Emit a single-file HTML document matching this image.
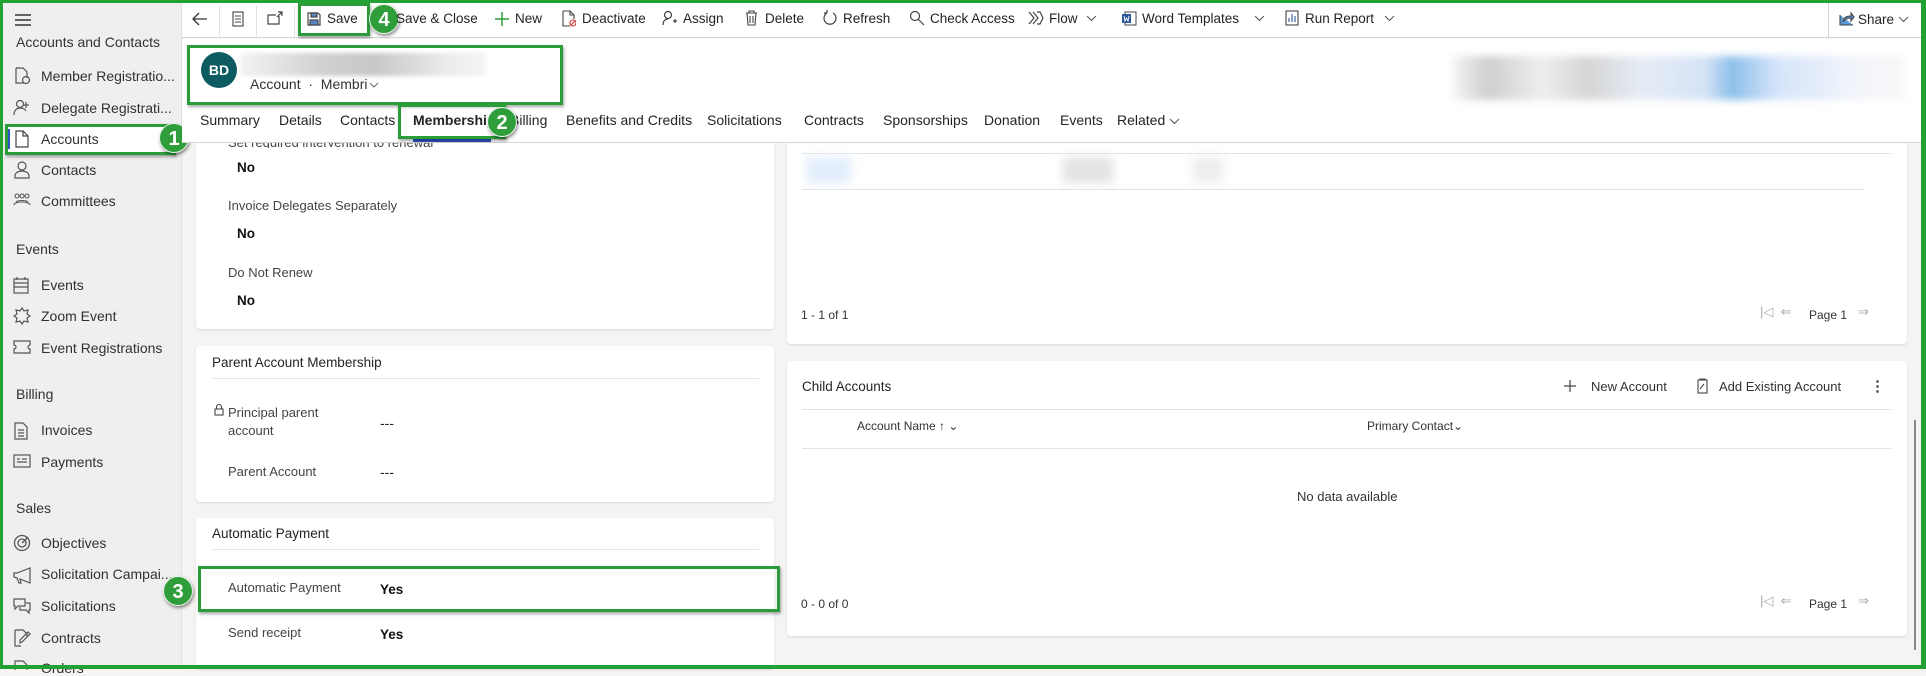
<!DOCTYPE html>
<html><head><meta charset="utf-8"><style>
*{margin:0;padding:0;box-sizing:border-box}
body{width:1926px;height:669px;overflow:hidden;background:#f5f4f3;font-family:"Liberation Sans",sans-serif;color:#242424;position:relative}
.a{position:absolute;white-space:nowrap}
.sb{position:absolute;left:0;top:0;width:182px;height:669px;background:#efefef;border-right:1px solid #e0e0e0}
.si{font-size:14px;color:#323130}
.sh{font-size:14px;color:#323130}
.tb{font-size:13.5px;color:#242424}
.tab{font-size:14px;color:#242424;top:112px}
.card{position:absolute;background:#fff;border-radius:4px;box-shadow:0 1px 2px rgba(0,0,0,.12)}
.lbl{font-size:13px;color:#444}
.val{font-size:13.5px;font-weight:bold;color:#111}
.num{position:absolute;width:30px;height:30px;border-radius:50%;background:#2f9e3a;color:#fff;font-weight:bold;font-size:20px;text-align:center;line-height:30px;box-shadow:1px 2px 3px rgba(0,0,0,.45);border:1px solid #e8f5e9}
.gb{position:absolute;border:3px solid #2a9d3a;box-shadow:1px 2px 3px rgba(0,0,0,.35)}
.sm{font-size:12px;color:#333}
svg{position:absolute}
</style></head><body>
<div class="sb"></div>
<svg style="left:14px;top:13px" width="18" height="14"><path d="M1 2h16M1 7h16M1 12h16" stroke="#333" stroke-width="1.4"/></svg>
<div class="a sh" style="left:16px;top:34px">Accounts and Contacts</div>
<svg style="left:13px;top:67px" width="18" height="18" fill="none" stroke="#555" stroke-width="1.2"><path d="M3 1h7l4 4v6M3 1v15h8"/><circle cx="13" cy="13" r="3.5"/></svg>
<div class="a si" style="left:41px;top:68px">Member Registratio...</div>
<svg style="left:13px;top:99px" width="18" height="18" fill="none" stroke="#555" stroke-width="1.2"><circle cx="7" cy="5" r="3.5"/><path d="M1 16c0-5 3-7 6-7s5 1 6 3M13 3v6M10 6h6"/></svg>
<div class="a si" style="left:41px;top:100px">Delegate Registrati...</div>
<div class="a" style="left:6px;top:125px;width:168px;height:28px;background:#fff"></div>
<div class="a" style="left:7px;top:129px;width:3px;height:20px;background:#2b55c7"></div>
<svg style="left:14px;top:130px" width="16" height="18" fill="none" stroke="#444" stroke-width="1.2"><path d="M2 1h7l5 5v11H2z M9 1v5h5"/></svg>
<div class="a si" style="left:41px;top:131px">Accounts</div>
<div class="gb" style="left:5px;top:124px;width:171px;height:31px"></div>
<div class="num" style="left:159px;top:123px">1</div>
<svg style="left:13px;top:161px" width="18" height="18" fill="none" stroke="#555" stroke-width="1.2"><circle cx="9" cy="5" r="4"/><path d="M2 17v-2c0-3 3-5 7-5s7 2 7 5v2z"/></svg>
<div class="a si" style="left:41px;top:162px">Contacts</div>
<svg style="left:13px;top:193px" width="18" height="14" fill="none" stroke="#555" stroke-width="1.1"><circle cx="4" cy="3" r="2"/><circle cx="9" cy="3" r="2"/><circle cx="14" cy="3" r="2"/><path d="M1 12c0-4 16-4 16 0M3 9c2-2 10-2 12 0"/></svg>
<div class="a si" style="left:41px;top:193px">Committees</div>
<div class="a sh" style="left:16px;top:241px">Events</div>
<svg style="left:13px;top:276px" width="16" height="18" fill="none" stroke="#555" stroke-width="1.2"><rect x="1" y="3" width="14" height="14"/><path d="M1 7h14M1 11h14M4 1v3M12 1v3"/></svg>
<div class="a si" style="left:41px;top:277px">Events</div>
<svg style="left:13px;top:307px" width="18" height="18" fill="none" stroke="#555" stroke-width="1.2"><path d="M9 1l2 3 4-1-1 4 3 2-3 2 1 4-4-1-2 3-2-3-4 1 1-4-3-2 3-2-1-4 4 1z"/></svg>
<div class="a si" style="left:41px;top:308px">Zoom Event</div>
<svg style="left:13px;top:339px" width="18" height="16" fill="none" stroke="#555" stroke-width="1.2"><path d="M1 2h16v4a2 2 0 0 0 0 4v4H1v-4a2 2 0 0 0 0-4z"/></svg>
<div class="a si" style="left:41px;top:340px">Event Registrations</div>
<div class="a sh" style="left:16px;top:386px">Billing</div>
<svg style="left:13px;top:422px" width="16" height="18" fill="none" stroke="#555" stroke-width="1.2"><path d="M2 1h8l4 4v12H2z M5 8h6M5 11h6M5 14h6"/></svg>
<div class="a si" style="left:41px;top:422px">Invoices</div>
<svg style="left:13px;top:454px" width="18" height="14" fill="none" stroke="#555" stroke-width="1.2"><rect x="1" y="1" width="16" height="12"/><path d="M4 5h3M9 5h5M4 8h10"/></svg>
<div class="a si" style="left:41px;top:454px">Payments</div>
<div class="a sh" style="left:16px;top:500px">Sales</div>
<svg style="left:13px;top:534px" width="18" height="18" fill="none" stroke="#555" stroke-width="1.3"><circle cx="9" cy="9" r="7.5"/><circle cx="9" cy="9" r="4"/><path d="M9 9l6-6"/></svg>
<div class="a si" style="left:41px;top:535px">Objectives</div>
<svg style="left:13px;top:566px" width="18" height="18" fill="none" stroke="#555" stroke-width="1.2"><path d="M1 7v4l3 1 2 5h2l-1-4 10 4V2L4 7z"/></svg>
<div class="a si" style="left:41px;top:566px">Solicitation Campai...</div>
<svg style="left:13px;top:597px" width="18" height="18" fill="none" stroke="#555" stroke-width="1.2"><path d="M1 2h11v7H5l-3 3V9H1z M13 6h4v7h-1v3l-3-3H7v-3"/></svg>
<div class="a si" style="left:41px;top:598px">Solicitations</div>
<svg style="left:13px;top:629px" width="18" height="18" fill="none" stroke="#555" stroke-width="1.2"><path d="M2 1h8l4 4v3M2 1v16h6M7 14l2-1 8-8-2-2-8 8z"/></svg>
<div class="a si" style="left:41px;top:630px">Contracts</div>
<svg style="left:13px;top:660px" width="16" height="10" fill="none" stroke="#555" stroke-width="1.2"><path d="M2 1h8l4 4v6H2z"/></svg>
<div class="a si" style="left:41px;top:660px">Orders</div>

<div class="a" style="left:182px;top:0;width:1744px;height:38px;background:#fff;border-bottom:1px solid #d6d6d6"></div>
<div class="a" style="left:219px;top:6px;width:1px;height:32px;background:#e1e1e1"></div>
<div class="a" style="left:256px;top:6px;width:1px;height:32px;background:#e1e1e1"></div>
<div class="a" style="left:294px;top:6px;width:1px;height:32px;background:#e1e1e1"></div>
<svg style="left:192px;top:12px" width="16" height="14" fill="none" stroke="#333" stroke-width="1.3"><path d="M15 7H2M7 1L1 7l6 6"/></svg>
<svg style="left:232px;top:11px" width="12" height="16" fill="none" stroke="#444" stroke-width="1.1"><rect x="1" y="1" width="10" height="14"/><path d="M3 5h6M3 8h6M3 11h6"/></svg>
<svg style="left:267px;top:11px" width="16" height="14" fill="none" stroke="#444" stroke-width="1.2"><path d="M12 5v8H1V4h8M11 1h4v4M15 1l-5 5"/></svg>
<svg style="left:307px;top:12px" width="14" height="14" fill="none" stroke="#444" stroke-width="1.2"><path d="M1 1h10l2 2v10H1z"/><rect x="4" y="1" width="6" height="4" fill="#5a86c8" stroke="#444"/><rect x="3" y="8" width="8" height="5" fill="#5a86c8"/></svg>
<div class="a tb" style="left:327px;top:11px">Save</div>
<div class="gb" style="left:298px;top:3px;width:72px;height:33px"></div>
<div class="num" style="left:369px;top:4px">4</div>
<div class="a tb" style="left:396px;top:11px">Save &amp; Close</div>
<svg style="left:494px;top:11px" width="16" height="16" stroke="#2f9e3a" stroke-width="1.5"><path d="M8 1v14M1 8h14"/></svg>
<div class="a tb" style="left:515px;top:11px">New</div>
<svg style="left:562px;top:10px" width="14" height="17" fill="none" stroke="#444" stroke-width="1.1"><path d="M1 1h7l4 4v4M1 1v15h7M8 1v4h4"/><circle cx="11" cy="13" r="3" stroke="#c33"/><path d="M9 15l4-4" stroke="#c33"/></svg>
<div class="a tb" style="left:582px;top:11px">Deactivate</div>
<svg style="left:662px;top:10px" width="16" height="16" fill="none" stroke="#444" stroke-width="1.2"><circle cx="6" cy="5" r="3.5"/><path d="M1 15c0-4 2-6 5-6M11 11h4M13 9v4"/></svg>
<div class="a tb" style="left:683px;top:11px">Assign</div>
<svg style="left:745px;top:10px" width="13" height="16" fill="none" stroke="#444" stroke-width="1.1"><path d="M1 3h11M4 3V1h5v2M2 3l1 12h7l1-12M5 6v7M8 6v7"/></svg>
<div class="a tb" style="left:765px;top:11px">Delete</div>
<svg style="left:822px;top:10px" width="16" height="16" fill="none" stroke="#444" stroke-width="1.2"><path d="M5 3a6 6 0 1 0 6 0M5 3V0M5 3H2"/></svg>
<div class="a tb" style="left:843px;top:11px">Refresh</div>
<svg style="left:909px;top:10px" width="16" height="16" fill="none" stroke="#444" stroke-width="1.2"><circle cx="6" cy="6" r="4.5"/><path d="M9 9l6 6"/></svg>
<div class="a tb" style="left:930px;top:11px">Check Access</div>
<svg style="left:1028px;top:11px" width="16" height="14" fill="none" stroke="#444" stroke-width="1.2"><path d="M1 1l5 6-5 6M5 1l5 6-5 6M9 1h3l3 6-3 6H9"/></svg>
<div class="a tb" style="left:1049px;top:11px">Flow</div>
<svg style="left:1086px;top:15px" width="11" height="7" fill="none" stroke="#555"><path d="M1 1l4.5 4.5L10 1"/></svg>
<svg style="left:1121px;top:11px" width="16" height="15"><rect x="4" y="1" width="11" height="13" fill="none" stroke="#444"/><rect x="1" y="3" width="9" height="9" fill="#2b579a"/><path d="M3 5l1 5 1.5-3 1.5 3 1-5" stroke="#fff" fill="none" stroke-width=".9"/></svg>
<div class="a tb" style="left:1142px;top:11px">Word Templates</div>
<svg style="left:1254px;top:15px" width="11" height="7" fill="none" stroke="#555"><path d="M1 1l4.5 4.5L10 1"/></svg>
<svg style="left:1285px;top:10px" width="14" height="16" fill="none" stroke="#444" stroke-width="1.1"><rect x="1" y="1" width="12" height="14"/><path d="M4 12V8M7 12V4M10 12V6" stroke="#2b579a"/></svg>
<div class="a tb" style="left:1305px;top:11px">Run Report</div>
<svg style="left:1384px;top:15px" width="11" height="7" fill="none" stroke="#555"><path d="M1 1l4.5 4.5L10 1"/></svg>
<div class="a" style="left:1828px;top:3px;width:1px;height:35px;background:#d6d6d6"></div>
<svg style="left:1839px;top:11px" width="16" height="15" fill="none" stroke="#444" stroke-width="1.1"><path d="M1 4v10h13M4 11c1-5 4-6 8-6V2l3 4-3 4V7c-3 0-6 1-8 4" fill="#5a9bd8"/></svg>
<div class="a tb" style="left:1858px;top:12px">Share</div>
<svg style="left:1898px;top:16px" width="11" height="7" fill="none" stroke="#555"><path d="M1 1l4.5 4.5L10 1"/></svg>

<div class="a" style="left:182px;top:39px;width:1740px;height:104px;background:#fff;border-bottom:1px solid #d6d6d6"></div>
<div class="a" style="left:201px;top:52px;width:36px;height:36px;border-radius:50%;background:#0b5b61;color:#fff;font-weight:bold;font-size:14px;text-align:center;line-height:36px">BD</div>
<div class="a" style="left:240px;top:53px;width:246px;height:23px;background:linear-gradient(90deg,#f3f3f3,#cfcfcf 35%,#c8c8c8 55%,#ececec 85%,#f4f4f4);filter:blur(2px)"></div>
<div class="a" style="left:250px;top:76px;font-size:14px;color:#333">Account &nbsp;·&nbsp; Membri</div>
<svg style="left:369px;top:82px" width="10" height="6" fill="none" stroke="#666"><path d="M1 1l4 4 4-4"/></svg>
<div class="gb" style="left:187px;top:45px;width:376px;height:60px"></div>
<div class="a" style="left:1452px;top:56px;width:452px;height:44px;background:linear-gradient(90deg,#f5f5f5,#cfcfcf 8%,#eeeeee 20%,#d5d5d5 30%,#e6ecf5 42%,#d5e3f6 56%,#8dc0ea 62%,#d6e4fa 72%,#f3f5fa 90%,#f7f7f7);filter:blur(4px)"></div>

<div class="a tab" style="left:200px">Summary</div>
<div class="a tab" style="left:279px">Details</div>
<div class="a tab" style="left:340px">Contacts</div>
<div class="a tab" style="left:413px;font-weight:bold">Membership</div>
<div class="a tab" style="left:510px">Billing</div>
<div class="a tab" style="left:566px">Benefits and Credits</div>
<div class="a tab" style="left:707px">Solicitations</div>
<div class="a tab" style="left:804px">Contracts</div>
<div class="a tab" style="left:883px">Sponsorships</div>
<div class="a tab" style="left:984px">Donation</div>
<div class="a tab" style="left:1060px">Events</div>
<div class="a tab" style="left:1117px">Related</div>
<svg style="left:1169px;top:118px" width="11" height="7" fill="none" stroke="#555"><path d="M1 1l4.5 4.5L10 1"/></svg>
<div class="a" style="left:413px;top:139px;width:78px;height:3px;background:#2b55c7"></div>
<div class="gb" style="left:398px;top:104px;width:108px;height:35px"></div>
<div class="num" style="left:487px;top:107px">2</div>

<div class="card" style="left:196px;top:143px;width:578px;height:186px;border-radius:0 0 4px 4px"></div>
<div class="a lbl" style="left:228px;top:143px;height:5px;overflow:hidden;line-height:0">Set required intervention to renewal</div>
<div class="a val" style="left:237px;top:160px">No</div>
<div class="a lbl" style="left:228px;top:198px">Invoice Delegates Separately</div>
<div class="a val" style="left:237px;top:226px">No</div>
<div class="a lbl" style="left:228px;top:265px">Do Not Renew</div>
<div class="a val" style="left:237px;top:293px">No</div>

<div class="card" style="left:196px;top:346px;width:578px;height:156px"></div>
<div class="a" style="left:212px;top:355px;font-size:13.5px;color:#242424">Parent Account Membership</div>
<div class="a" style="left:212px;top:378px;width:547px;height:1px;background:#e6e6e6"></div>
<svg style="left:214px;top:403px" width="10" height="13" fill="none" stroke="#444" stroke-width="1.1"><rect x="1" y="6" width="8" height="6"/><path d="M2.5 6V4a2.5 2.5 0 0 1 5 0v2"/></svg>
<div class="a lbl" style="left:228px;top:405px">Principal parent</div>
<div class="a lbl" style="left:228px;top:423px">account</div>
<div class="a" style="left:380px;top:415px;font-size:14px">---</div>
<div class="a lbl" style="left:228px;top:464px">Parent Account</div>
<div class="a" style="left:380px;top:464px;font-size:14px">---</div>

<div class="card" style="left:196px;top:518px;width:578px;height:151px"></div>
<div class="a" style="left:212px;top:526px;font-size:13.5px;color:#242424">Automatic Payment</div>
<div class="a" style="left:212px;top:549px;width:547px;height:1px;background:#e6e6e6"></div>
<div class="a lbl" style="left:228px;top:580px">Automatic Payment</div>
<div class="a val" style="left:380px;top:582px">Yes</div>
<div class="gb" style="left:198px;top:566px;width:582px;height:46px"></div>
<div class="num" style="left:163px;top:576px">3</div>
<div class="a lbl" style="left:228px;top:625px">Send receipt</div>
<div class="a val" style="left:380px;top:627px">Yes</div>

<div class="card" style="left:787px;top:143px;width:1120px;height:201px;border-radius:0 0 4px 4px"></div>
<div class="a" style="left:802px;top:153px;width:1089px;height:1px;background:#e3e3e3"></div>
<div class="a" style="left:806px;top:157px;width:45px;height:26px;background:#e2eefb;filter:blur(5px)"></div>
<div class="a" style="left:1063px;top:157px;width:50px;height:26px;background:#e3e3e3;filter:blur(5px)"></div>
<div class="a" style="left:1193px;top:157px;width:30px;height:26px;background:#ededed;filter:blur(5px)"></div>
<div class="a" style="left:802px;top:189px;width:1062px;height:1px;background:#e3e3e3"></div>
<div class="a sm" style="left:801px;top:308px">1 - 1 of 1</div>
<div class="a sm" style="left:1809px;top:308px">Page 1</div>
<div class="a" style="left:1760px;top:304px;font-size:13px;color:#aaa">|◁ &nbsp;⇐</div>
<div class="a" style="left:1858px;top:304px;font-size:13px;color:#aaa">⇒</div>

<div class="card" style="left:787px;top:361px;width:1120px;height:275px"></div>
<div class="a" style="left:802px;top:379px;font-size:13.5px;color:#242424">Child Accounts</div>
<svg style="left:1563px;top:379px" width="14" height="14" stroke="#444" stroke-width="1.2"><path d="M7 1v12M1 7h12"/></svg>
<div class="a" style="left:1591px;top:379px;font-size:13px;color:#333">New Account</div>
<svg style="left:1697px;top:378px" width="11" height="16" fill="none" stroke="#444" stroke-width="1.1"><rect x="1" y="2" width="9" height="13"/><path d="M3 2V1h5v1M3 11l4-5"/></svg>
<div class="a" style="left:1719px;top:379px;font-size:13px;color:#333">Add Existing Account</div>
<div class="a" style="left:1870px;top:377px;font-size:15px;color:#444;font-weight:bold">⋮</div>
<div class="a" style="left:802px;top:409px;width:1089px;height:1px;background:#e3e3e3"></div>
<div class="a" style="left:857px;top:419px;font-size:12px;color:#333">Account Name ↑ ⌄</div>
<div class="a" style="left:1367px;top:419px;font-size:12px;color:#333">Primary Contact⌄</div>
<div class="a" style="left:802px;top:448px;width:1089px;height:1px;background:#e3e3e3"></div>
<div class="a" style="left:1297px;top:489px;font-size:13px;color:#333">No data available</div>
<div class="a sm" style="left:801px;top:597px">0 - 0 of 0</div>
<div class="a sm" style="left:1809px;top:597px">Page 1</div>
<div class="a" style="left:1760px;top:593px;font-size:13px;color:#aaa">|◁ &nbsp;⇐</div>
<div class="a" style="left:1858px;top:593px;font-size:13px;color:#aaa">⇒</div>

<div class="a" style="left:1914px;top:420px;width:2px;height:230px;background:#8a8a8a"></div>
<div class="a" style="left:0;top:0;width:1926px;height:669px;border:3px solid #22a135;border-right-width:5px;border-bottom-width:4px"></div>
</body></html>
